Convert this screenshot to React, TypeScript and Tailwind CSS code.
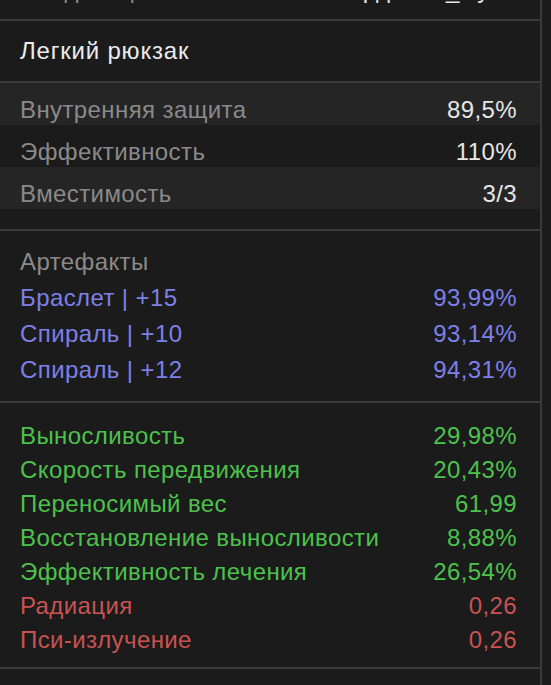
import React from "react";

const font = { fontFamily: '"Liberation Sans", "DejaVu Sans", sans-serif' };

const stats = [
  { label: "Внутренняя защита", value: "89,5%", light: true },
  { label: "Эффективность", value: "110%", light: false },
  { label: "Вместимость", value: "3/3", light: true },
];

const artifacts = [
  { label: "Браслет | +15", value: "93,99%" },
  { label: "Спираль | +10", value: "93,14%" },
  { label: "Спираль | +12", value: "94,31%" },
];

const effects = [
  { label: "Выносливость", value: "29,98%", c: "text-[#4cc24c]" },
  { label: "Скорость передвижения", value: "20,43%", c: "text-[#4cc24c]" },
  { label: "Переносимый вес", value: "61,99", c: "text-[#4cc24c]" },
  { label: "Восстановление выносливости", value: "8,88%", c: "text-[#4cc24c]" },
  { label: "Эффективность лечения", value: "26,54%", c: "text-[#4cc24c]" },
  { label: "Радиация", value: "0,26", c: "text-[#c95252]" },
  { label: "Пси-излучение", value: "0,26", c: "text-[#c95252]" },
];

export default function App() {
  return (
    <div className="min-h-[685px] w-[551px] bg-[#1b1b1b] overflow-hidden" style={font}>
      <div className="w-[542px] border-r-2 border-[#3a3a3a] min-h-[685px] text-[24px] tracking-[0.4px]">
        <div className="h-[19px] overflow-hidden">
          <div className="-mt-[22px] flex justify-between pl-[20px] pr-[23px] leading-[24px]">
            <span className="text-[#8a8a8a]">Владелец</span>
            <span className="text-[#e6e6e6]">Кардинал_Пуля</span>
          </div>
        </div>
        <div className="border-t-2 border-[#3a3a3a] h-[62px] flex items-center pl-[20px] text-[#ececec] tracking-[0.8px]">
          Легкий рюкзак
        </div>
        <div className="border-t-2 border-[#3a3a3a] pb-[20px]">
          {stats.map((s) => (
            <div
              key={s.label}
              className={`h-[42px] flex items-center justify-between pl-[20px] pr-[23px] pt-[12px] ${s.light ? "bg-[#252525]" : ""}`}
            >
              <span className="text-[#8a8a8a]">{s.label}</span>
              <span className="text-[#e6e6e6]">{s.value}</span>
            </div>
          ))}
        </div>
        <div className="border-t-2 border-[#3a3a3a] pt-[13px] pb-[13px]">
          <div className="h-[36px] flex items-center pl-[20px] text-[#8a8a8a]">Артефакты</div>
          {artifacts.map((a) => (
            <div key={a.label} className="h-[36px] flex items-center justify-between pl-[20px] pr-[23px] text-[#7c80e8]">
              <span>{a.label}</span>
              <span>{a.value}</span>
            </div>
          ))}
        </div>
        <div className="border-t-2 border-[#3a3a3a] pt-[16px] pb-[10px]">
          {effects.map((e) => (
            <div key={e.label} className={`h-[34px] flex items-center justify-between pl-[20px] pr-[23px] ${e.c}`}>
              <span>{e.label}</span>
              <span>{e.value}</span>
            </div>
          ))}
        </div>
        <div className="border-t-2 border-[#3a3a3a]" />
      </div>
    </div>
  );
}
